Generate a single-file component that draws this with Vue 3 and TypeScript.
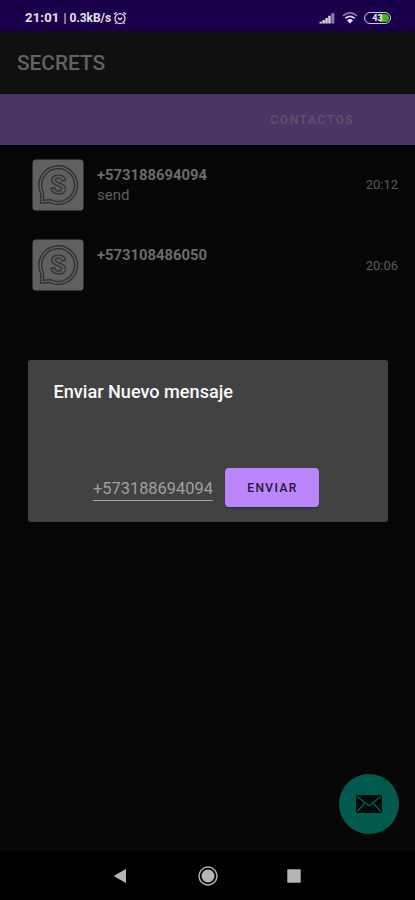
<script setup lang="ts">
interface Conversation {
  phone: string
  preview: string
  time: string
}

const conversations: Conversation[] = [
  { phone: '+573188694094', preview: 'send', time: '20:12' },
  { phone: '+573108486050', preview: '', time: '20:06' },
]
const recipient = '+573188694094'
</script>

<template>
  <div class="screen">
    <header class="status">
      <span class="clock">21:01</span>
      <span class="divider">|</span>
      <span class="speed">0.3kB/s</span>
      <svg class="alarm" viewBox="0 0 14 14" width="14" height="14">
        <circle cx="7" cy="7.6" r="5" />
        <path d="M1 3.4 3.6 1.2M13 3.4 10.4 1.2M4.7 6.7 7 8.6l2.4-1.9M3.4 11.6l-1 1.2M10.6 11.6l1 1.2" />
      </svg>
      <svg class="signal" viewBox="0 0 16 13" width="16" height="13">
        <path d="M.5 12.5v-1.8h2.5v1.8zM3.4 12.5V9h2.5v3.5zM6.3 12.5V7h2.5v5.5zM9.2 12.5V4.8h2.5v7.7z" />
        <path class="faint" d="M12.3 12.5V2.2h3v10.3z" />
      </svg>
      <svg class="wifi" viewBox="0 0 16 13" width="16" height="13">
        <path d="M1 4.8Q8-.9 15 4.8" />
        <path class="mid" d="M3.4 7.3Q8 3.6 12.6 7.3" />
        <path class="core" d="M5 9.3Q8 6.8 11 9.3L8 12.4z" />
      </svg>
      <div class="battery"><span class="charge"></span><span class="level">43</span></div>
    </header>

    <div class="appbar">SECRETS</div>
    <nav class="tabs"><span></span><span class="tab">CONTACTOS</span></nav>

    <main class="list">
      <div v-for="item in conversations" :key="item.phone" class="row">
        <svg class="avatar" viewBox="0 0 52 52" width="52" height="52">
          <rect x=".5" y=".5" width="51" height="51" rx="3.5" fill="#606060" />
          <g fill="none" stroke="#303030" stroke-width="1.3">
            <path d="M8.9 34.8A19.3 19.3 0 1 1 17.8 43.5L8.6 44.3z" />
            <path d="M11.5 33.5A16.4 16.4 0 1 1 18.5 40.6L11.4 41.2z" />
          </g>
          <text x="26.3" y="35.3" text-anchor="middle">S</text>
        </svg>
        <div class="body">
          <div class="phone">{{ item.phone }}</div>
          <div class="preview">{{ item.preview }}</div>
        </div>
        <time>{{ item.time }}</time>
      </div>
    </main>

    <footer class="sysnav">
      <svg viewBox="0 0 24 24" width="24" height="24"><path d="M4.5 12 17 5v14z" /></svg>
      <svg viewBox="0 0 24 24" width="24" height="24">
        <circle cx="12" cy="12" r="9" class="ring" /><circle cx="12" cy="12" r="6.5" />
      </svg>
      <svg viewBox="0 0 24 24" width="24" height="24"><rect x="5.3" y="5.3" width="13.4" height="13.4" /></svg>
    </footer>

    <section class="dialog">
      <h1>Enviar Nuevo mensaje</h1>
      <div class="form">
        <div class="field">{{ recipient }}</div>
        <button type="button">ENVIAR</button>
      </div>
    </section>

    <button class="fab" type="button" aria-label="Nuevo mensaje">
      <svg viewBox="0 0 28 20" width="28" height="20">
        <rect x="1" y="1" width="26" height="18" rx="1.5" fill="#020a09" />
        <path d="M2 2.5 14 11.8 26 2.5M2 17.8 9.8 9M26 17.8 18.2 9" />
      </svg>
    </button>
  </div>
</template>

<style>
body {
  background: #050505;
}
</style>

<style scoped>
.screen {
  position: relative;
  display: flex;
  flex-direction: column;
  width: 415px;
  height: 900px;
  overflow: hidden;
  background: #060606;
  font-family: Roboto, sans-serif;
}
.status {
  box-sizing: border-box;
  display: flex;
  align-items: center;
  height: 31px;
  padding: 4px 24px 0 25px;
  background: #1a004b;
  color: #e4e0ec;
  font-weight: 700;
  font-size: 12px;
  white-space: nowrap;
}
.clock {
  font-size: 13px;
  letter-spacing: 0.2px;
}
.divider {
  margin: 0 3px 0 4px;
  font-weight: 400;
}
.speed {
  letter-spacing: -0.05px;
}
.alarm {
  margin-left: 2px;
  fill: none;
  stroke: #ddd8e8;
  stroke-width: 1.3;
}
.signal {
  margin-left: auto;
  fill: #d5d0e0;
}
.faint {
  fill: #8d80a8;
}
.wifi {
  margin: 0 6px 0 7px;
  fill: none;
  stroke: #8d80a8;
  stroke-width: 1.6;
}
.mid {
  stroke: #e0dbe9;
}
.core {
  fill: #eeeaf5;
  stroke: none;
}
.battery {
  position: relative;
  box-sizing: border-box;
  display: flex;
  justify-content: flex-end;
  width: 27px;
  height: 12px;
  padding: 1px;
  border: 1.5px solid #cfcbd8;
  border-radius: 6px;
}
.charge {
  width: 9px;
  border-radius: 0 4px 4px 0;
  background: #43b51d;
}
.level {
  position: absolute;
  inset: 0;
  color: #f0edf5;
  font-size: 9px;
  line-height: 10px;
  text-align: center;
}
.appbar {
  box-sizing: border-box;
  display: flex;
  align-items: center;
  height: 62.5px;
  padding: 2px 0 0 17px;
  background: #101010;
  color: #636363;
  font-size: 20.8px;
  font-weight: 500;
}
.tabs {
  display: grid;
  grid-template-columns: 1fr 1fr;
  align-items: center;
  height: 51px;
  background: #4b3566;
}
.tab {
  padding: 2px 0 0 2px;
  color: #63506c;
  font-size: 12px;
  font-weight: 500;
  letter-spacing: 1.6px;
  text-align: center;
}
.list {
  flex: 1;
  padding: 14px 17px 0 31.5px;
}
.row {
  display: flex;
  height: 80.5px;
}
.body {
  flex: 1;
  padding: 7px 0 0 13.5px;
}
.phone {
  height: 18px;
  color: #6b6b6b;
  font-size: 14.8px;
  font-weight: 700;
  line-height: 18px;
}
.preview {
  margin-top: 2px;
  color: #5e5e5e;
  font-size: 15px;
  line-height: 18px;
}
time {
  padding-top: 17.5px;
  color: #5b5b5b;
  font-size: 13px;
  line-height: 18px;
}
.avatar text {
  fill: none;
  stroke: #303030;
  stroke-width: 1.2;
  font-size: 26px;
  font-weight: 700;
}
.sysnav {
  display: grid;
  grid-template-columns: repeat(3, 86.5px);
  justify-content: center;
  justify-items: center;
  align-items: center;
  height: 49px;
  background: #000;
  fill: #b5b5b5;
}
.ring {
  fill: none;
  stroke: #b5b5b5;
  stroke-width: 1.4;
}
.dialog {
  position: absolute;
  left: 28px;
  top: 359.5px;
  box-sizing: border-box;
  width: 360px;
  height: 162.5px;
  padding: 21.5px 25.5px;
  border-radius: 3px;
  background: #424242;
}
h1 {
  margin: 0;
  color: #fafafa;
  font-size: 18.1px;
  font-weight: 500;
  line-height: 22px;
  white-space: nowrap;
}
.form {
  display: flex;
  align-items: flex-start;
  gap: 12px;
  margin: 65px 0 0 39.5px;
}
.field {
  box-sizing: border-box;
  width: 120px;
  height: 33px;
  padding-top: 9.5px;
  border-bottom: 1.5px solid #a5a5a5;
  color: #a0a0a0;
  font-size: 16.4px;
  line-height: 22px;
}
.form button {
  width: 94px;
  height: 39px;
  padding: 1px 0 0 1px;
  border: 0;
  border-radius: 4px;
  background: #bb86fc;
  box-shadow: 0 1px 2px #292929;
  color: #24152f;
  font-family: inherit;
  font-size: 12px;
  font-weight: 500;
  letter-spacing: 1.4px;
}
.fab {
  position: absolute;
  left: 339px;
  top: 774px;
  display: grid;
  place-items: center;
  width: 60px;
  height: 60px;
  padding: 0;
  border: 0;
  border-radius: 50%;
  background: #01594f;
}
.fab path {
  fill: none;
  stroke: #01594f;
  stroke-width: 1.5;
}
</style>
